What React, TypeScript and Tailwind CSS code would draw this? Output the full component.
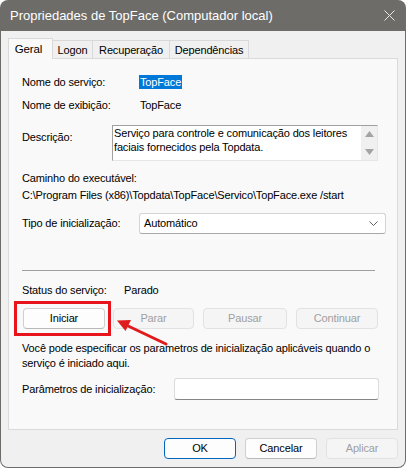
import React from "react";

const font = { fontFamily: '"Liberation Sans", Arial, sans-serif' };

function Btn({ label, w, disabled, primary, cls }: { label: string; w: string; disabled?: boolean; primary?: boolean; cls?: string }) {
  const base = "h-[21px] flex items-center justify-center rounded-[4px] border text-[11px] tracking-[-0.15px] " + w + " " + (cls || "");
  if (disabled) return <div className={base + " bg-[#f5f5f5] border-[#e2e2e2] text-[#a0a0a0]"}>{label}</div>;
  if (primary) return <div className={base + " bg-[#fdfdfd] border-[#0067c0] text-black"}>{label}</div>;
  return <div className={base + " bg-[#fdfdfd] border-[#d0d0d0] border-b-[#b8b8b8] text-black"}>{label}</div>;
}

export default function App() {
  return (
    <div className="w-[406px] h-[468px] bg-white" style={font}>
      <div className="relative w-[406px] h-[468px] rounded-[8px] bg-[#6d6c68] flex flex-col overflow-hidden px-px pb-px">
        {/* title */}
        <div className="h-[31px] shrink-0 flex items-center justify-between pl-[9px] pr-[10px] text-white text-[13px]">
          <span>Propriedades de TopFace (Computador local)</span>
          <svg width="11" height="11" viewBox="0 0 11 11">
            <path d="M0.5 0.5 L10.5 10.5 M10.5 0.5 L0.5 10.5" stroke="#e8e8e8" strokeWidth="1" />
          </svg>
        </div>
        {/* body */}
        <div className="flex-1 bg-[#f0f0f0] rounded-b-[7px] pl-[7px] pt-[7px] text-black text-[11px] tracking-[-0.15px]">
          {/* tabs */}
          <div className="flex items-end h-[20px]">
            <div className="relative z-10 w-[45px] h-[21px] -mb-px bg-[#f9f9f9] border border-b-0 border-[#d9d9d9] flex items-start justify-center pt-[2px] pr-[4px] text-[11.5px]">Geral</div>
            <div className="w-[40px] h-[18px] bg-[#f0f0f0] border-t border-r border-[#d9d9d9] flex items-center justify-center pt-[1px]">Logon</div>
            <div className="w-[77px] h-[18px] bg-[#f0f0f0] border-t border-r border-[#d9d9d9] flex items-center justify-center pt-[1px]">Recuperação</div>
            <div className="w-[79px] h-[18px] bg-[#f0f0f0] border-t border-r border-[#d9d9d9] flex items-center justify-center pt-[1px]">Dependências</div>
          </div>
          {/* panel */}
          <div className="w-[390px] h-[372px] bg-[#f9f9f9] border border-[#dadada] pl-[13px] flex flex-col">
            <div className="mt-[15px] h-[16px] flex items-center">
              <span className="w-[117px]">Nome do serviço:</span>
              <span className="bg-[#0078d7] text-white px-px h-[14px] leading-[14px]">TopFace</span>
            </div>
            <div className="mt-[7px] h-[16px] flex items-center">
              <span className="w-[117px]">Nome de exibição:</span>
              <span className="px-px">TopFace</span>
            </div>
            <div className="mt-[12px] flex">
              <span className="w-[90px] pt-[4px] leading-[16px]">Descrição:</span>
              <div className="w-[266px] h-[36px] bg-white border-t border-l border-[#a0a0a0] border-b border-r border-b-[#e6e6e6] border-r-[#e6e6e6] flex">
                <div className="flex-1 pl-[1px] leading-[14px] whitespace-nowrap">
                  Serviço para controle e comunicação dos leitores<br />faciais fornecidos pela Topdata.
                </div>
                <div className="w-[16px] bg-[#f0f0f0] flex flex-col items-center justify-between py-[5px]">
                  <svg width="9" height="6" viewBox="0 0 9 6"><path d="M4.5 0 L9 6 L0 6 Z" fill="#a3a3a3" /></svg>
                  <svg width="9" height="6" viewBox="0 0 9 6"><path d="M0 0 L9 0 L4.5 6 Z" fill="#a3a3a3" /></svg>
                </div>
              </div>
            </div>
            <div className="mt-[9px] h-[16px] leading-[16px]">Caminho do executável:</div>
            <div className="mt-[1px] h-[16px] leading-[16px] whitespace-nowrap">C:\Program Files (x86)\Topdata\TopFace\Servico\TopFace.exe /start</div>
            <div className="mt-[10px] flex items-center">
              <span className="w-[117px]">Tipo de inicialização:</span>
              <div className="w-[247px] h-[21px] bg-white border border-[#d4d4d4] border-b-[#a8a8a8] rounded-[3px] flex items-center justify-between pl-[4px] pr-[7px]">
                <span>Automático</span>
                <svg width="9" height="5" viewBox="0 0 9 5"><path d="M0.5 0.5 L4.5 4.5 L8.5 0.5" stroke="#606060" strokeWidth="1" fill="none" /></svg>
              </div>
            </div>
            <div className="mt-[36px] w-[353px] h-px bg-[#a0a0a0]" />
            <div className="mt-[11px] h-[16px] flex items-center">
              <span className="w-[102px]">Status do serviço:</span>
              <span>Parado</span>
            </div>
            <div className="mt-[10px] flex">
              <Btn label="Iniciar" w="w-[82px]" cls="ml-px" />
              <Btn label="Parar" w="w-[81px]" disabled cls="ml-[8px]" />
              <Btn label="Pausar" w="w-[84px]" disabled cls="ml-[9px]" />
              <Btn label="Continuar" w="w-[82px]" disabled cls="ml-[9px]" />
            </div>
            <div className="mt-[12px] leading-[15px] whitespace-nowrap">
              Você pode especificar os parametros de inicialização aplicáveis quando o<br />serviço é iniciado aqui.
            </div>
            <div className="mt-[7px] flex items-center">
              <span className="w-[152px]">Parâmetros de inicialização:</span>
              <div className="w-[205px] h-[22px] bg-white border border-[#dcdcdc] border-b-[#868686] rounded-[3px]" />
            </div>
          </div>
          {/* bottom buttons */}
          <div className="mt-[8px] w-[390px] flex justify-end">
            <Btn label="OK" w="w-[72px]" primary />
            <Btn label="Cancelar" w="w-[72px]" cls="ml-[9px]" />
            <Btn label="Aplicar" w="w-[72px]" disabled cls="ml-[9px]" />
          </div>
        </div>
        {/* red highlight box */}
        <div className="absolute left-[14px] top-[301px] w-[97px] h-[35px] border-[3px] border-[#e8141b]" />
        {/* red arrow */}
        <svg className="absolute left-0 top-0" width="406" height="468" viewBox="0 0 406 468">
          <line x1="166" y1="344" x2="126" y2="325" stroke="#e01b1b" strokeWidth="3" strokeLinecap="round" />
          <path d="M117 320.5 L131 320 L125.5 331 Z" fill="#e01b1b" />
        </svg>
      </div>
    </div>
  );
}
